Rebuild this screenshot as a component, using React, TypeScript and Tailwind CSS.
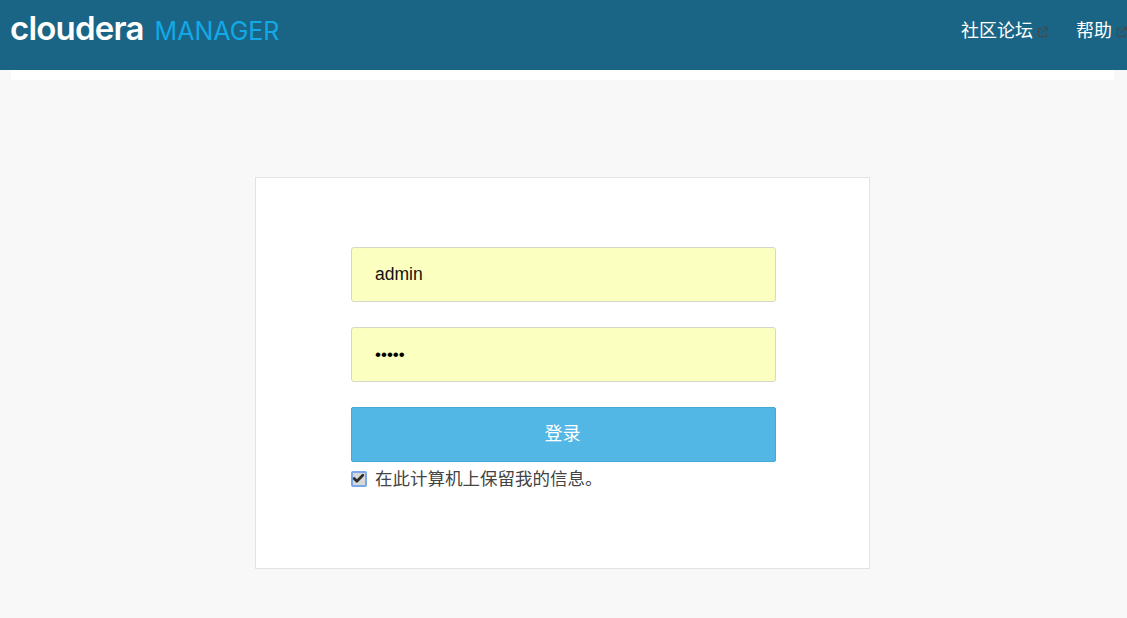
import { Check } from 'lucide-react';

const cjk = "font-['Liberation_Sans','Noto_Sans_CJK_SC',sans-serif]";

function NavLink({ label }: { label: string }) {
  return (
    <a className="flex shrink-0 items-center whitespace-nowrap text-[18px] leading-6 text-white">
      {label}
      <svg
        viewBox="0 0 24 24"
        fill="none"
        stroke="currentColor"
        strokeWidth="2.6"
        className="ml-[4px] mt-[2px] h-[12px] w-[12px] shrink-0 text-[#3c4d56]"
      >
        <path d="M10 5H3v16h16v-7" />
        <path d="M14 3h7v7M21 3 10 14" />
      </svg>
    </a>
  );
}

export default function App() {
  return (
    <div className={`min-h-[618px] overflow-hidden bg-[#f8f8f8] ${cjk}`}>
      {/* Top bar */}
      <header className="flex h-[70px] items-center justify-between bg-[#1a6585] pl-[10px]">
        <div className="mb-[11px] flex items-baseline">
          <span className="font-['Inter',sans-serif] text-[33px] font-semibold leading-9 tracking-[-0.8px] text-white">cloudera</span>
          <span className="ml-[11px] font-['Inter',sans-serif] text-[25px] leading-9 text-[#12a9e6]">MANAGER</span>
        </div>
        <nav className="mb-[8px] flex w-[166px] shrink-0 gap-[27px] overflow-hidden">
          <NavLink label="社区论坛" />
          <NavLink label="帮助" />
        </nav>
      </header>
      <div className="ml-[11px] mr-[13px] h-[10px] bg-white" />

      {/* Login card */}
      <main className="ml-[255px] mt-[97px] h-[392px] w-[615px] border border-[#e3e3e3] bg-white px-[95px] pt-[69px]">
        <form className="flex flex-col">
          <input
            readOnly
            value="admin"
            className="h-[55px] w-[425px] rounded-[3px] border border-[#d6d6cc] bg-[#fbffbf] px-[23px] text-[17.5px] text-[#111] outline-none"
          />
          <input
            readOnly
            type="password"
            value="admin"
            className="mt-[25px] h-[55px] w-[425px] rounded-[3px] border border-[#d6d6cc] bg-[#fbffbf] px-[23px] text-[17px] text-black outline-none"
          />
          <button
            type="button"
            className="mt-[25px] h-[55px] w-[425px] rounded-[2px] border border-[#46a8d4] bg-[#53b7e5] pr-[2px] text-[18px] text-white"
          >
            登录
          </button>
          <label className="mt-[5px] flex items-center text-[17.5px] leading-6 text-[#444]">
            <span className="relative h-4 w-4 shrink-0">
              <input
                readOnly
                type="checkbox"
                checked
                className="block h-4 w-4 appearance-none rounded-[2px] border-2 border-[#7ba6ea] bg-[#d8d8d8]"
              />
              <Check className="absolute left-[1px] top-[1px] h-[13px] w-[13px] text-[#2e2e2e]" strokeWidth={5} />
            </span>
            <span className="ml-2">在此计算机上保留我的信息。</span>
          </label>
        </form>
      </main>
    </div>
  );
}
